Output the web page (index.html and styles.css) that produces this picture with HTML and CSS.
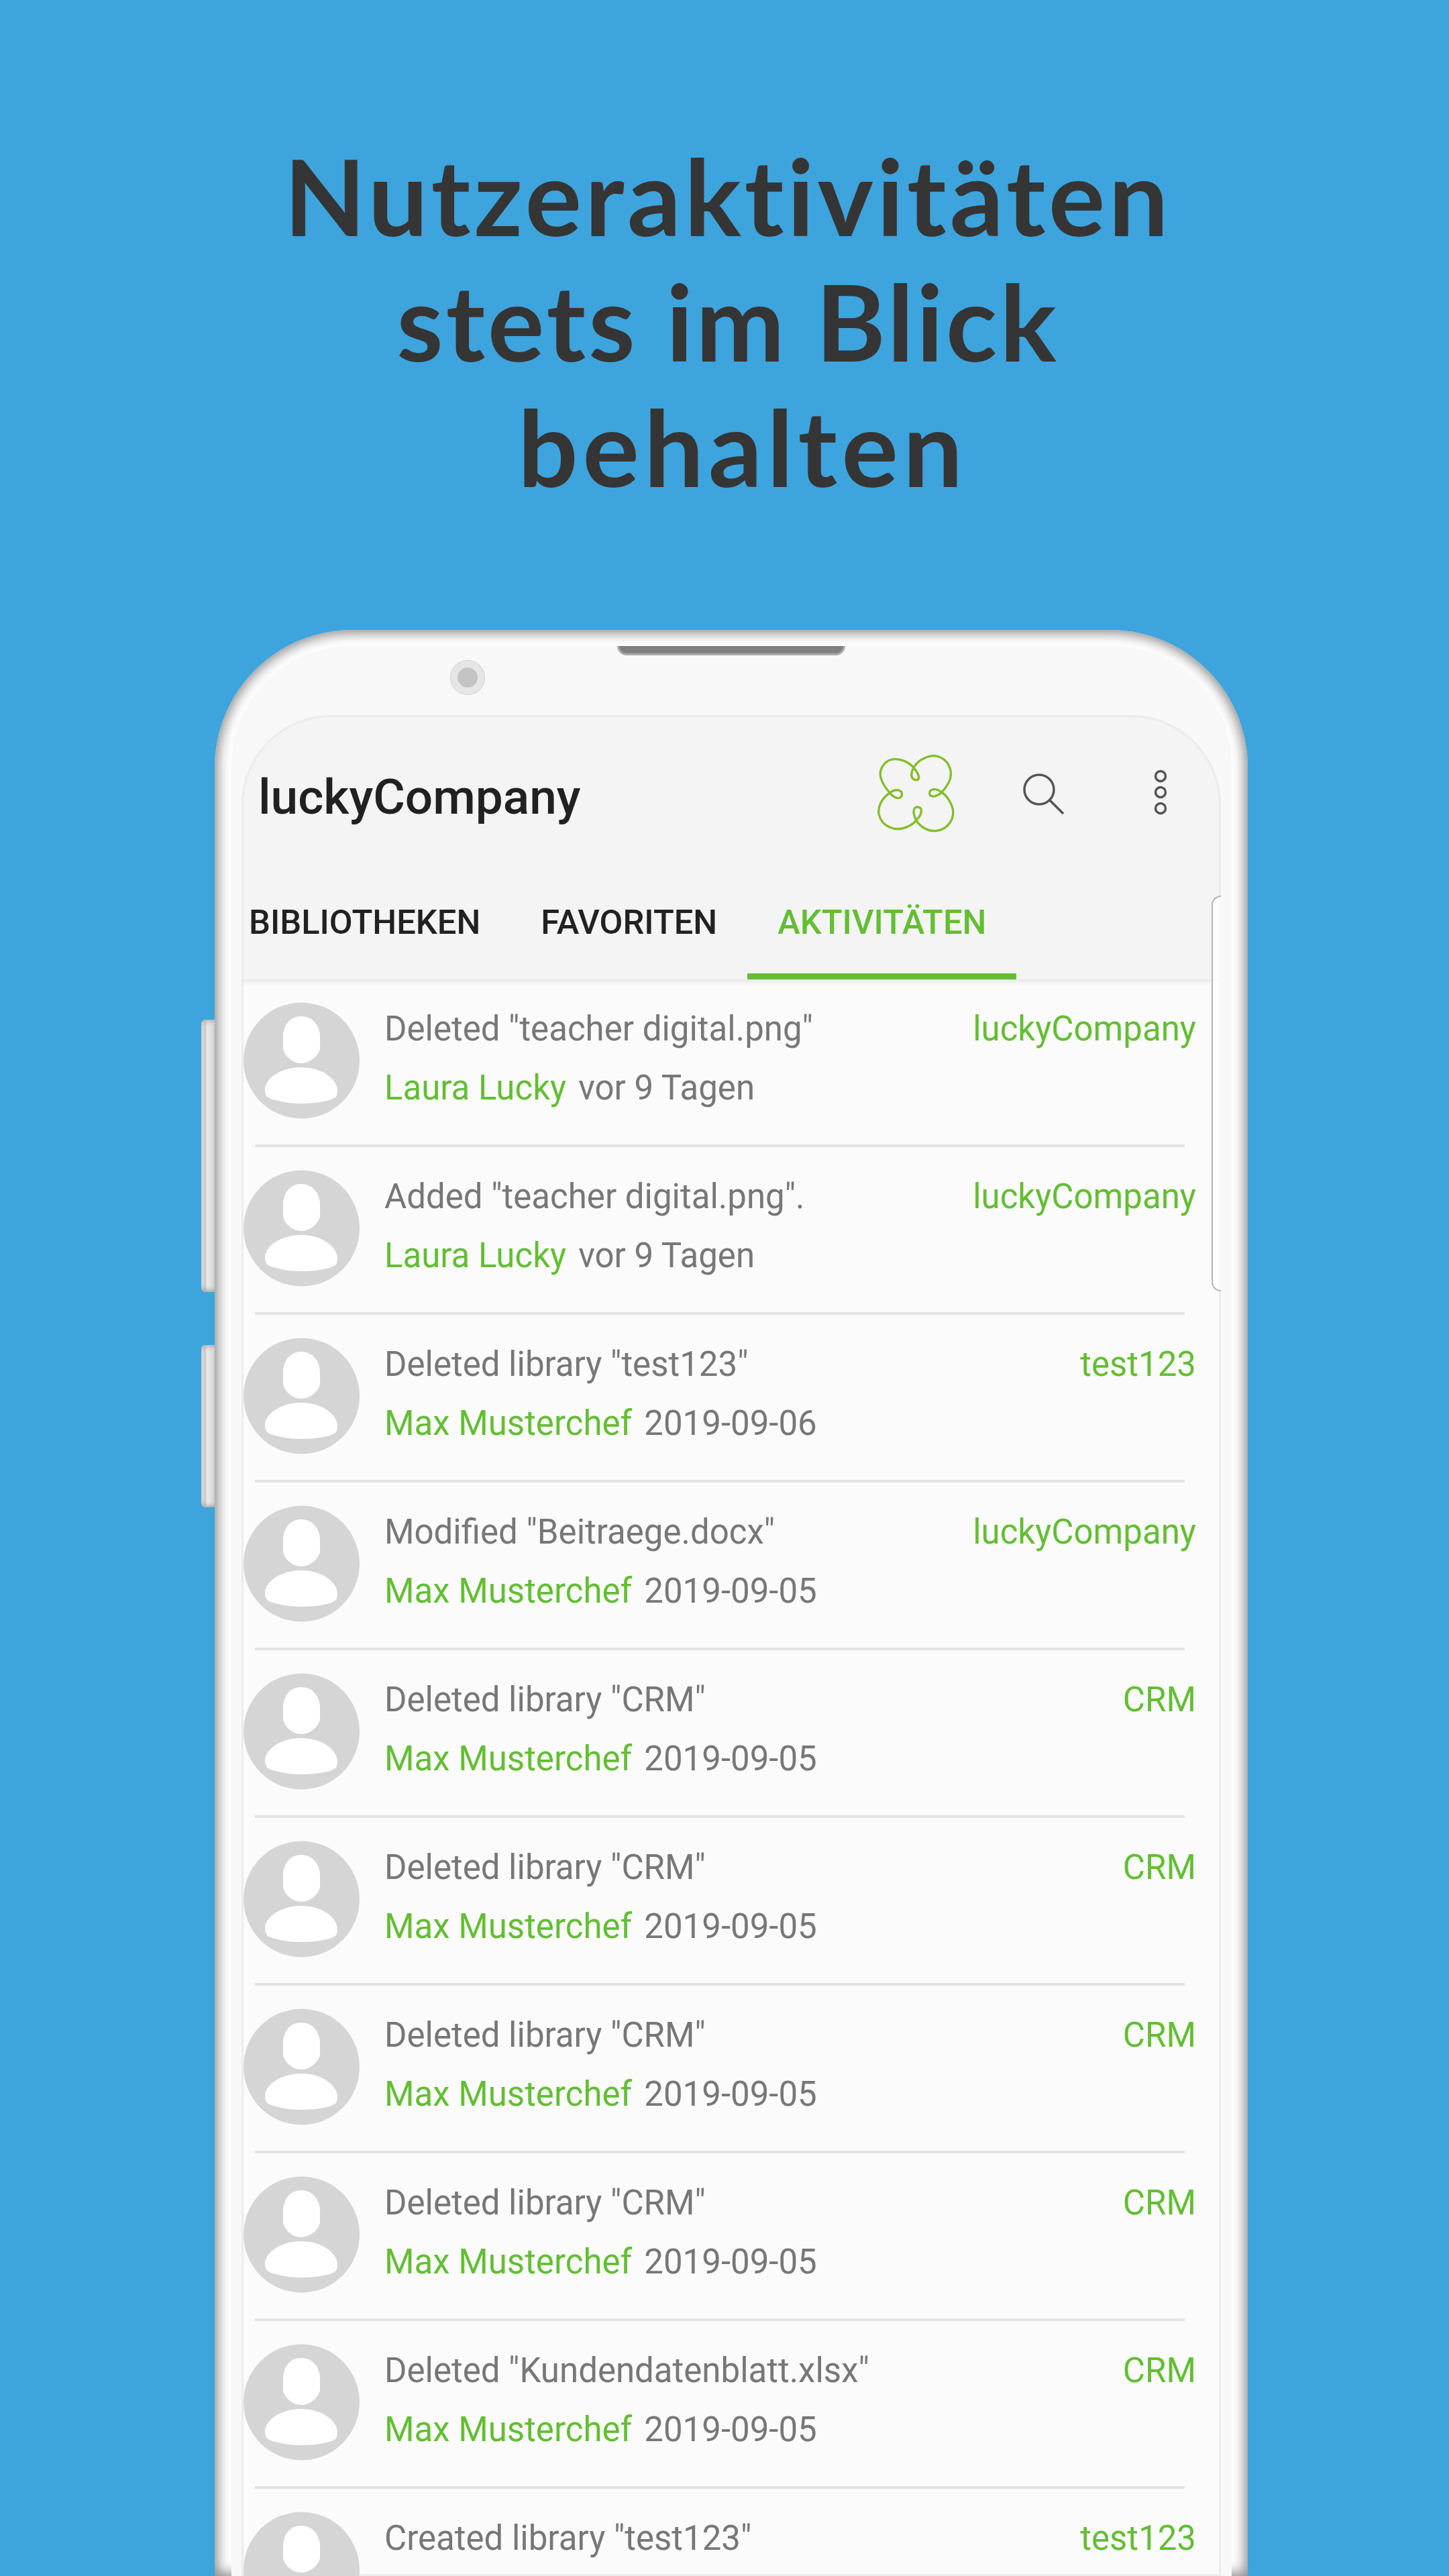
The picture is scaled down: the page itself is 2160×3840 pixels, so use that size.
FILE: index.html
```html
<!DOCTYPE html>
<html>
<head>
    <meta charset="utf-8">
    <link rel="stylesheet" href="styles.css">
</head>
<body>
    <h1 class="headline">Nutzeraktivitäten<br><span class="headline-mid">stets im Blick</span><br><span class="headline-last">behalten</span></h1>

    <div class="phone">
        <div class="side-btn side-btn-power"></div>
        <div class="side-btn side-btn-volume"></div>
        <div class="bezel">
            <div class="top-bar">
                <div class="camera"></div>
                <div class="speaker"></div>
            </div>
            <div class="screen">
                <div class="edge-tab"></div>
                <div class="app-head">
                    <div class="toolbar">
                        <span class="app-title">luckyCompany</span>
                        <svg class="logo" viewBox="85 72 345 348"><path d="M372 240C410 200 420 165 410 135C395 85 345 65 300 85C275 95 258 110 247 130C235 150 230 180 255 185C280 188 272 160 247 130C225 105 190 90 160 92C115 95 90 140 100 175C108 205 125 225 140 243C155 262 190 280 195 250C195 225 160 225 140 243C100 270 85 310 92 340C105 395 165 415 210 398C230 390 250 378 258 365C245 340 240 305 265 306C290 308 285 340 258 365C275 395 315 418 350 412C400 405 430 360 422 315C415 285 395 255 372 240C350 262 318 265 318 245C318 222 350 222 372 240Z"/></svg>
                        <svg class="search" viewBox="0 0 64 64"><circle cx="25" cy="25" r="22"/><path d="M41 41L61 61"/></svg>
                        <svg class="more" viewBox="0 0 20 68"><circle cx="10" cy="10" r="7.5"/><circle cx="10" cy="34" r="7.5"/><circle cx="10" cy="58" r="7.5"/></svg>
                    </div>
                    <div class="tabs">
                        <span class="tab">BIBLIOTHEKEN</span>
                        <span class="tab">FAVORITEN</span>
                        <span class="tab tab-active">AKTIVITÄTEN</span>
                    </div>
                </div>
                <div class="list">
                    <div class="row">
                        <svg class="avatar"><use href="#person"/></svg>
                        <div class="row-body">
                            <div class="row-line"><span class="action">Deleted "teacher digital.png"</span><span class="lib">luckyCompany</span></div>
                            <div class="row-line row-meta"><span class="user">Laura Lucky</span><span class="when">vor 9 Tagen</span></div>
                        </div>
                    </div>
                    <div class="row">
                        <svg class="avatar"><use href="#person"/></svg>
                        <div class="row-body">
                            <div class="row-line"><span class="action">Added "teacher digital.png".</span><span class="lib">luckyCompany</span></div>
                            <div class="row-line row-meta"><span class="user">Laura Lucky</span><span class="when">vor 9 Tagen</span></div>
                        </div>
                    </div>
                    <div class="row">
                        <svg class="avatar"><use href="#person"/></svg>
                        <div class="row-body">
                            <div class="row-line"><span class="action">Deleted library "test123"</span><span class="lib">test123</span></div>
                            <div class="row-line row-meta"><span class="user">Max Musterchef</span><span class="when">2019-09-06</span></div>
                        </div>
                    </div>
                    <div class="row">
                        <svg class="avatar"><use href="#person"/></svg>
                        <div class="row-body">
                            <div class="row-line"><span class="action">Modified "Beitraege.docx"</span><span class="lib">luckyCompany</span></div>
                            <div class="row-line row-meta"><span class="user">Max Musterchef</span><span class="when">2019-09-05</span></div>
                        </div>
                    </div>
                    <div class="row">
                        <svg class="avatar"><use href="#person"/></svg>
                        <div class="row-body">
                            <div class="row-line"><span class="action">Deleted library "CRM"</span><span class="lib">CRM</span></div>
                            <div class="row-line row-meta"><span class="user">Max Musterchef</span><span class="when">2019-09-05</span></div>
                        </div>
                    </div>
                    <div class="row">
                        <svg class="avatar"><use href="#person"/></svg>
                        <div class="row-body">
                            <div class="row-line"><span class="action">Deleted library "CRM"</span><span class="lib">CRM</span></div>
                            <div class="row-line row-meta"><span class="user">Max Musterchef</span><span class="when">2019-09-05</span></div>
                        </div>
                    </div>
                    <div class="row">
                        <svg class="avatar"><use href="#person"/></svg>
                        <div class="row-body">
                            <div class="row-line"><span class="action">Deleted library "CRM"</span><span class="lib">CRM</span></div>
                            <div class="row-line row-meta"><span class="user">Max Musterchef</span><span class="when">2019-09-05</span></div>
                        </div>
                    </div>
                    <div class="row">
                        <svg class="avatar"><use href="#person"/></svg>
                        <div class="row-body">
                            <div class="row-line"><span class="action">Deleted library "CRM"</span><span class="lib">CRM</span></div>
                            <div class="row-line row-meta"><span class="user">Max Musterchef</span><span class="when">2019-09-05</span></div>
                        </div>
                    </div>
                    <div class="row">
                        <svg class="avatar"><use href="#person"/></svg>
                        <div class="row-body">
                            <div class="row-line"><span class="action">Deleted "Kundendatenblatt.xlsx"</span><span class="lib">CRM</span></div>
                            <div class="row-line row-meta"><span class="user">Max Musterchef</span><span class="when">2019-09-05</span></div>
                        </div>
                    </div>
                    <div class="row">
                        <svg class="avatar"><use href="#person"/></svg>
                        <div class="row-body">
                            <div class="row-line"><span class="action">Created library "test123"</span><span class="lib">test123</span></div>
                        </div>
                    </div>
                </div>
            </div>
        </div>
    </div>

    <svg class="defs" width="0" height="0">
        <symbol id="person" viewBox="0 0 173 174">
            <circle cx="86.5" cy="87" r="86.5" fill="#d5d5d5"/>
            <path fill="#fff" d="M86 21C104 21 114 36 114 52V68C114 76 102 91 86 91C70 91 59 76 59 68V52C59 36 68 21 86 21Z"/>
            <path fill="#fff" d="M86 97C118 97 140 115 140 132C140 142 136 144 124 147C110 150 98 151 86 151C74 151 62 150 48 146C36 143 32 141 32 130C32 115 54 97 86 97Z"/>
        </symbol>
    </svg>
</body>
</html>
```

FILE: styles.css
```css
html, body {
    margin: 0;
    padding: 0;
}
body {
    width: 2160px;
    height: 3840px;
    overflow: hidden;
    background-color: #3DA4DD;
    font-family: Roboto, sans-serif;
}
.headline {
    margin: 0;
    padding: 198px 0 0 10px;
    height: 939px;
    box-sizing: border-box;
    text-align: center;
    font-family: Lato, sans-serif;
    font-weight: 700;
    font-size: 158px;
    line-height: 187px;
    letter-spacing: 5px;
    color: #353535;
}
.headline-mid {
    letter-spacing: 4px;
}
.headline-last {
    margin-left: 44px;
    letter-spacing: 7px;
}
.defs {
    position: absolute;
}

/* phone frame */
.phone {
    position: relative;
    box-sizing: border-box;
    margin-left: 320px;
    width: 1540px;
    height: 2901px;
    padding: 24px 24px 0 25px;
    border-radius: 205px 205px 0 0;
    background-color: #fff;
    box-shadow: inset 0 0 18px 5px #8e8e8e;
}
.side-btn {
    position: absolute;
    left: -20px;
    width: 20px;
    border-radius: 6px 0 0 6px;
    background: linear-gradient(to right, #dcdcdc, #c9c9c9 35%, #ececec 40%, #d2d2d2);
    box-shadow: inset 0 -7px 6px -4px #a8a8a8, inset 0 7px 6px -4px #b4b4b4;
}
.side-btn-power {
    top: 581px;
    height: 406px;
}
.side-btn-volume {
    top: 1066px;
    height: 242px;
}
.bezel {
    box-sizing: border-box;
    height: 100%;
    padding: 0 16px 0 15px;
    border-radius: 176px 176px 0 0;
    background-color: #F8F8F8;
}
.top-bar {
    position: relative;
    height: 103px;
}
.camera {
    position: absolute;
    left: 312px;
    top: 22px;
    width: 30px;
    height: 30px;
    border: 10px solid #e6e6e6;
    border-radius: 50%;
    background-color: #c4c4c4;
    box-shadow: 0 0 0 1px #d0d0d0;
}
.speaker {
    position: absolute;
    left: 560px;
    top: 0;
    width: 334px;
    height: 11px;
    border: 3px solid #adadad;
    border-top: none;
    border-radius: 0 0 14px 14px;
    background-color: #808080;
}

/* app screen */
.screen {
    position: relative;
    height: 2774px;
    overflow: hidden;
    border-radius: 134px 134px 0 0;
    box-shadow: inset 0 0 0 3px #ececec;
    background-color: #FBFBFB;
}
.edge-tab {
    position: absolute;
    z-index: 2;
    right: 0;
    top: 269px;
    width: 14px;
    height: 590px;
    box-sizing: border-box;
    border: 2px solid #b4b4b4;
    border-right: none;
    border-radius: 18px 0 0 18px;
    background-color: rgba(255, 255, 255, 0.7);
}
.app-head {
    height: 394px;
    border-radius: 134px 134px 0 0;
    background-color: #F4F4F4;
    border: 3px solid #ececec;
    border-bottom: none;
    box-sizing: border-box;
    box-shadow: 0 2px 10px rgba(0, 0, 0, 0.12);
    position: relative;
}
.toolbar {
    display: flex;
    align-items: flex-start;
    height: 249px;
    padding-left: 22px;
}
.app-title {
    margin-top: 77px;
    font-size: 73px;
    font-weight: 500;
    line-height: 84px;
    color: #212121;
    flex: 1;
}
.logo {
    width: 115px;
    height: 116px;
    margin-top: 56px;
    fill: none;
    stroke: #84BD2C;
    stroke-width: 10;
}
.search {
    width: 64px;
    height: 64px;
    margin: 83px 0 0 101px;
    fill: none;
    stroke: #555;
    stroke-width: 3.5;
    overflow: visible;
}
.more {
    width: 20px;
    height: 68px;
    margin: 78px 77px 0 132px;
    fill: none;
    stroke: #555;
    stroke-width: 3.5;
}
.tabs {
    display: flex;
    height: 142px;
    margin-left: -37px;
}
.tab {
    padding: 27px 45px 0;
    font-size: 50.6px;
    font-weight: 500;
    line-height: 60px;
    color: #212121;
}
.tab-active {
    height: 142px;
    box-sizing: border-box;
    border-bottom: 9px solid #63BE33;
    color: #63BE33;
}

/* activity rows */
.row {
    display: flex;
    height: 250px;
    box-sizing: border-box;
    padding: 34px 37px 0 3px;
    position: relative;
}
.row::after {
    content: "";
    position: absolute;
    left: 20px;
    right: 54px;
    bottom: 0;
    height: 4px;
    background-color: #E3E3E3;
}
.avatar {
    width: 173px;
    height: 174px;
    flex: none;
}
.row-body {
    flex: 1;
    margin-left: 37px;
}
.row-line {
    display: flex;
    justify-content: space-between;
    margin-top: 10px;
    font-size: 51px;
    line-height: 60px;
}
.row-meta {
    justify-content: flex-start;
    margin-top: 28px;
}
.action, .when {
    color: #777;
}
.lib, .user {
    color: #63BE33;
}
.when {
    margin-left: 18px;
}
```
